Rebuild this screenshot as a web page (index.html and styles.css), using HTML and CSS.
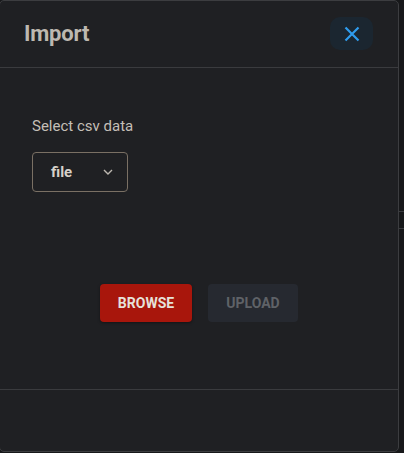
FILE: index.html
```html
<!DOCTYPE html>
<html>
<head>
<meta charset="utf-8">
<link rel="stylesheet" href="styles.css">
</head>
<body>
<div class="page">
  <div class="dialog">
    <div class="header">
      <div class="title">Import</div>
      <button class="close" aria-label="close">
        <svg width="18" height="18" viewBox="0 0 18 18"><path d="M2.5 2.5 L15.5 15.5 M15.5 2.5 L2.5 15.5" stroke="#2f9ced" stroke-width="2.2" fill="none"/></svg>
      </button>
    </div>
    <div class="body">
      <div class="label">Select csv data</div>
      <div class="select">
        <span class="value">file</span>
        <svg class="chev" width="10" height="6" viewBox="0 0 10 6"><path d="M1 1 L5 5 L9 1" stroke="#bdb8b0" stroke-width="1.4" fill="none"/></svg>
      </div>
      <div class="actions">
        <button class="btn browse">BROWSE</button>
        <button class="btn upload">UPLOAD</button>
      </div>
    </div>
    <div class="footer"></div>
  </div>
  <div class="side">
    <div class="line l1"></div>
    <div class="line l2"></div>
  </div>
</div>
</body>
</html>
```
FILE: styles.css
```css
html, body {
  margin: 0;
  padding: 0;
  background: #17181a;
  font-family: Roboto, "Noto Sans", sans-serif;
}
.page {
  display: flex;
  width: 405px;
  height: 453px;
  margin-left: -1px;
}
.dialog {
  width: 400px;
  height: 452px;
  box-sizing: border-box;
  background: #1f2023;
  border: 1px solid #3c3d40;
  border-radius: 5px;
  display: flex;
  flex-direction: column;
  flex: none;
}
.header {
  height: 67px;
  box-sizing: border-box;
  border-bottom: 1px solid #3a3b3e;
  display: flex;
  align-items: center;
  justify-content: space-between;
  padding: 0 25px 1px 24px;
}
.title {
  font-size: 22px;
  font-weight: 700;
  color: #bdb8b0;
  letter-spacing: -0.2px;
}
.close {
  width: 43px;
  height: 33px;
  border: none;
  border-radius: 10px;
  background: #1b2630;
  display: flex;
  align-items: center;
  justify-content: center;
  padding: 0;
}
.body {
  height: 322px;
  box-sizing: border-box;
  border-bottom: 1px solid #3a3b3e;
  padding: 50px 0 0 32px;
  display: flex;
  flex-direction: column;
}
.label {
  font-size: 15px;
  color: #c4bfb7;
  line-height: 17px;
}
.select {
  margin-top: 17px;
  width: 96px;
  height: 40px;
  box-sizing: border-box;
  border: 1px solid #7a7064;
  border-radius: 4px;
  display: flex;
  align-items: center;
  justify-content: space-between;
  padding: 0 14px 0 18px;
}
.value {
  font-size: 15px;
  font-weight: 700;
  color: #d6d1c9;
}
.actions {
  margin-top: 92px;
  margin-left: -32px;
  display: flex;
  justify-content: center;
  gap: 16px;
}
.btn {
  height: 38px;
  border: none;
  border-radius: 4px;
  font-family: Roboto, "Noto Sans", sans-serif;
  font-size: 14px;
  font-weight: 700;
  padding: 0;
}
.browse {
  width: 92px;
  background: #a8160c;
  color: #e6e1da;
  box-shadow: 0 1px 3px rgba(0,0,0,0.4);
}
.upload {
  width: 90px;
  background: #262930;
  color: #5f6267;
}
.footer {
  flex: 1;
}
.side {
  flex: 1;
  display: flex;
  flex-direction: column;
  padding-top: 211px;
}
.line {
  height: 1px;
  background: #3a3b3e;
}
.l2 {
  margin-top: 16px;
}
```
